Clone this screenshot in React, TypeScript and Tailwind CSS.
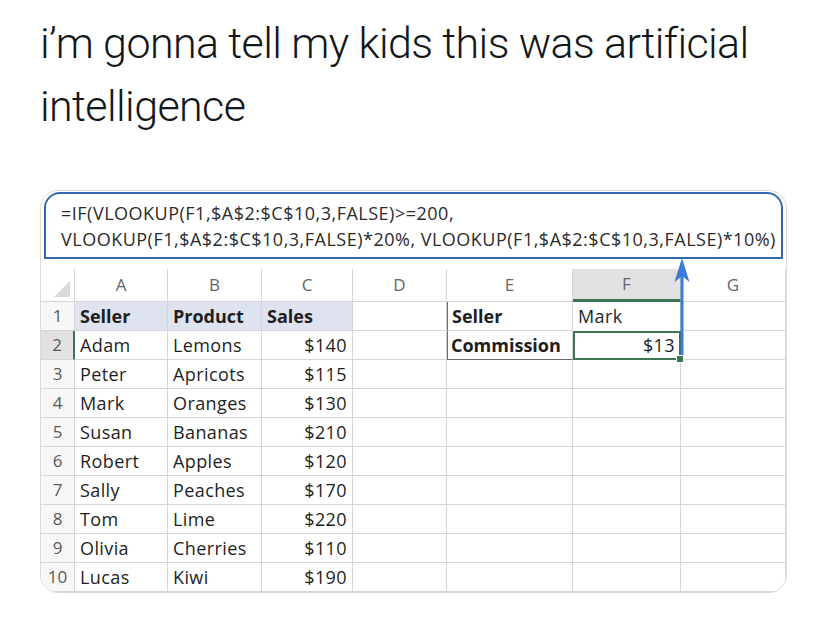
import React from "react";

const ROWS: [string, string, string][] = [
  ["Adam", "Lemons", "$140"],
  ["Peter", "Apricots", "$115"],
  ["Mark", "Oranges", "$130"],
  ["Susan", "Bananas", "$210"],
  ["Robert", "Apples", "$120"],
  ["Sally", "Peaches", "$170"],
  ["Tom", "Lime", "$220"],
  ["Olivia", "Cherries", "$110"],
  ["Lucas", "Kiwi", "$190"],
];

const cols = "grid grid-cols-[34px_93px_94px_91px_94px_126px_108px_105px]";
const cell = "h-[29px] border-r border-b border-[#d6d6d6] flex items-center px-[5px] text-[#1e1e1e] tracking-[0.4px]";
const bold = "font-bold tracking-[0px]";
const num = "h-[29px] border-r border-b border-[#d6d6d6] flex items-center justify-center bg-[#f7f7f7] text-[#5a5a5a] text-[17px]";

export default function App() {
  return (
    <div className="w-[828px] h-[623px] overflow-hidden bg-white">
      <h1 className="pl-[40px] pr-[30px] pt-[12px] font-['Roboto',sans-serif] text-[43px] font-light leading-[63px] tracking-[-0.6px] text-[#14171a]">
        i’m gonna tell my kids this was artificial intelligence
      </h1>

      <div className="relative ml-[40px] mt-[52px] h-[403px] w-[747px] overflow-hidden rounded-[18px] border border-[#dadada] font-['Open_Sans',sans-serif]">
        {/* formula bar */}
        <div className="mx-[3px] mt-[1px] h-[67px] rounded-t-[16px] border-2 border-[#3569ad] px-[15px] pt-[6px] text-[18px] leading-[26px] tracking-[0.5px] text-[#2b2b2b]">
          <div>=IF(VLOOKUP(F1,$A$2:$C$10,3,FALSE)&gt;=200,</div>
          <div className="whitespace-nowrap">VLOOKUP(F1,$A$2:$C$10,3,FALSE)*20%, VLOOKUP(F1,$A$2:$C$10,3,FALSE)*10%)</div>
        </div>

        <div className="mt-[10px] text-[18px]">
          {/* column headers */}
          <div className={cols}>
            <div className="relative h-[33px] border-r border-b border-[#d6d6d6] bg-white">
              <div className="absolute bottom-[4px] right-[4px] h-0 w-0 border-b-[16px] border-l-[16px] border-b-[#d9d9d9] border-l-transparent" />
            </div>
            {["A", "B", "C", "D", "E", "F", "G"].map((c) => (
              <div
                key={c}
                className={
                  c === "F"
                    ? "flex h-[33px] items-center justify-center border-r border-b-[3px] border-r-[#d6d6d6] border-b-[#3f7450] bg-[#e1e1e1] text-[17px] text-[#666]"
                    : "flex h-[33px] items-center justify-center border-r border-b border-[#d6d6d6] bg-white text-[17px] text-[#666]"
                }
              >
                {c}
              </div>
            ))}
          </div>

          {/* row 1 */}
          <div className={cols}>
            <div className={num}>1</div>
            <div className={`${cell} ${bold} bg-[#dfe3f0]`}>Seller</div>
            <div className={`${cell} ${bold} bg-[#dfe3f0]`}>Product</div>
            <div className={`${cell} ${bold} bg-[#dfe3f0]`}>Sales</div>
            <div className={cell} />
            <div className="flex h-[29px] items-center border-l border-l-[#6b6b6b] border-r border-r-[#d6d6d6] border-b border-b-[#d6d6d6] px-[4px] font-bold text-[#1e1e1e]">
              Seller
            </div>
            <div className={`${cell} border-b-0`}>Mark</div>
            <div className={cell} />
          </div>

          {/* rows 2-10 */}
          {ROWS.map(([s, p, v], i) => {
            const n = i + 2;
            const sel = n === 2;
            return (
              <div key={n} className={cols}>
                <div
                  className={
                    sel
                      ? "flex h-[29px] items-center justify-center border-r-2 border-b border-r-[#3f7450] border-b-[#d6d6d6] bg-[#e1e1e1] text-[17px] text-[#5a5a5a]"
                      : num
                  }
                >
                  {n}
                </div>
                <div className={cell}>{s}</div>
                <div className={cell}>{p}</div>
                <div className={`${cell} justify-end`}>{v}</div>
                <div className={cell} />
                {sel ? (
                  <div className="flex h-[29px] items-center border-l border-b border-l-[#6b6b6b] border-b-[#6b6b6b] border-r border-r-[#d6d6d6] px-[3px] font-bold text-[#1e1e1e]">
                    Commission
                  </div>
                ) : (
                  <div className={cell} />
                )}
                {sel ? (
                  <div className="relative flex h-[29px] items-center justify-end border-2 border-[#3f7450] px-[4px] tracking-[0.4px] text-[#1e1e1e]">
                    $13
                    <div className="absolute -bottom-[5px] -right-[5px] h-[8px] w-[8px] border border-white bg-[#3f7450]" />
                  </div>
                ) : (
                  <div className={cell} />
                )}
                <div className={cell} />
              </div>
            );
          })}
        </div>

        {/* arrow */}
        <svg
          className="absolute left-[633px] top-[67px]"
          width="16"
          height="98"
          viewBox="0 0 16 98"
        >
          <line x1="8" y1="16" x2="8" y2="97" stroke="#3b7bd6" strokeWidth="3" />
          <path d="M8 0 L15.5 24 L8 18 L0.5 24 Z" fill="#3b7bd6" />
        </svg>
      </div>
    </div>
  );
}
